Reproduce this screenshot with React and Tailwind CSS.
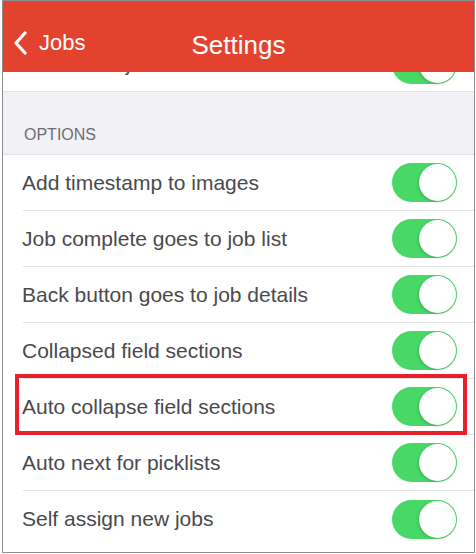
const options = [
  "Add timestamp to images",
  "Job complete goes to job list",
  "Back button goes to job details",
  "Collapsed field sections",
  "Auto collapse field sections",
  "Auto next for picklists",
  "Self assign new jobs",
];

function Toggle() {
  return (
    <div className="flex h-[39px] w-[65px] shrink-0 items-center justify-end rounded-full bg-[#48d865] p-[1px]">
      <div className="h-[37px] w-[37px] rounded-full bg-white shadow-[-1px_1px_3px_rgba(0,0,0,0.18)]" />
    </div>
  );
}

function Row({ label, last }) {
  return (
    <div className="flex h-[56px] items-center bg-white pl-[20px]">
      <div
        className={`flex h-full flex-1 items-center justify-between pr-[17px] ${
          last ? "" : "border-b border-[#e3e3e6]"
        }`}
      >
        <span className="-ml-[1px] text-[21px] text-[#4a4a4d]">{label}</span>
        <Toggle />
      </div>
    </div>
  );
}

export default function App() {
  return (
    <div
      className="h-[554px] w-[476px] overflow-hidden bg-white pl-[2px]"
      style={{ fontFamily: '"Liberation Sans", Arial, sans-serif' }}
    >
      <div className="relative h-[553px] w-[473px] overflow-hidden border border-[#8e8e8e]">
        <header className="absolute left-0 right-0 top-0 z-10 flex h-[71px] items-center bg-[#e3432e] text-white">
          <div className="flex items-center pl-[9px] pt-[12px]">
            <svg width="18" height="24" viewBox="0 0 18 24" fill="none">
              <path
                d="M13 2 L4 12 L13 22"
                stroke="white"
                strokeWidth="3.2"
                strokeLinecap="round"
                strokeLinejoin="round"
              />
            </svg>
            <span className="ml-[9px] text-[22px]">Jobs</span>
          </div>
          <h1 className="absolute left-0 right-0 top-[31px] text-center text-[26px] leading-none">
            Settings
          </h1>
        </header>

        <div className="relative mt-[36px]">
          <div className="flex h-[55px] items-center border-b border-[#e3e3e6] bg-white pl-[20px] pr-[17px]">
            <span className="flex-1 text-[21px] text-[#4a4a4d]">
              Show new job alerts
            </span>
            <Toggle />
          </div>

          <div className="flex h-[62px] items-end bg-[#f2f1f6] pb-[7px] pl-[21px]">
            <span className="text-[16px] text-[#6d6d72]">OPTIONS</span>
          </div>

          <div className="border-t border-[#e3e3e6]">
            {options.map((label, i) => (
              <Row key={label} label={label} last={i === options.length - 1} />
            ))}
          </div>

          <div className="absolute left-[12px] top-[337px] h-[61px] w-[452px] border-4 border-[#e8202a]" />
        </div>
      </div>
    </div>
  );
}
